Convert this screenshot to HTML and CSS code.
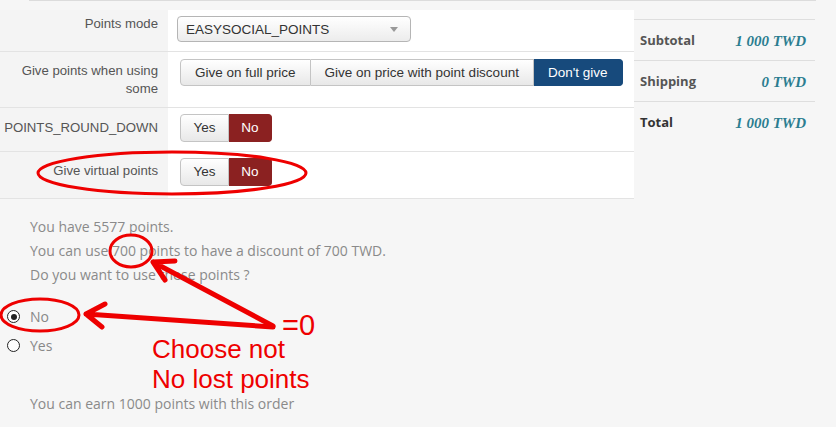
FILE: index.html
```html
<!DOCTYPE html>
<html>
<head>
<meta charset="utf-8">
<link rel="stylesheet" href="styles.css">
</head>
<body>
<div class="page">
  <div class="topline"></div>
  <div class="layout">
    <div class="main">
      <div class="form">
        <div class="row r1">
          <div class="label">Points mode</div>
          <div class="value">
            <div class="select"><span>EASYSOCIAL_POINTS</span><span class="caret"></span></div>
          </div>
        </div>
        <div class="row r2">
          <div class="label">Give points when using<br>some</div>
          <div class="value">
            <div class="btngroup">
              <span class="btn">Give on full price</span>
              <span class="btn">Give on price with point discount</span>
              <span class="btn blue">Don't give</span>
            </div>
          </div>
        </div>
        <div class="row r3">
          <div class="label">POINTS_ROUND_DOWN</div>
          <div class="value">
            <div class="btngroup">
              <span class="btn yes">Yes</span>
              <span class="btn red">No</span>
            </div>
          </div>
        </div>
        <div class="row r4">
          <div class="label">Give virtual points</div>
          <div class="value">
            <div class="btngroup">
              <span class="btn yes">Yes</span>
              <span class="btn red">No</span>
            </div>
          </div>
        </div>
      </div>
      <div class="points">
        <p class="line">You have 5577 points.</p>
        <p class="line">You can use 700 points to have a discount of 700 TWD.</p>
        <p class="line">Do you want to use these points ?</p>
        <div class="radios">
          <label class="radio"><span class="dot checked"></span>No</label>
          <label class="radio"><span class="dot"></span>Yes</label>
        </div>
        <p class="earn">You can earn 1000 points with this order</p>
      </div>
    </div>
    <div class="side">
      <div class="srow"><span class="sl">Subtotal</span><span class="sv">1 000 TWD</span></div>
      <div class="srow"><span class="sl">Shipping</span><span class="sv">0 TWD</span></div>
      <div class="srow last"><span class="sl total">Total</span><span class="sv">1 000 TWD</span></div>
    </div>
  </div>
  <svg class="notes" width="836" height="427" viewBox="0 0 836 427">
    <g fill="none" stroke="#ee0000">
      <ellipse cx="172" cy="173" rx="134" ry="21" stroke-width="3"/>
      <ellipse cx="131" cy="251" rx="21" ry="16" stroke-width="3"/>
      <ellipse cx="40" cy="315" rx="39" ry="16" stroke-width="3"/>
      <g stroke-width="5" stroke-linecap="round" stroke-linejoin="round">
        <path d="M273 326 L153 262 M153 262 L175 261 M153 262 L165 280"/>
        <path d="M273 327 L86 314 M86 314 L105 304 M86 314 L102 327"/>
      </g>
    </g>
    <g class="ntext" fill="#ee0000">
      <text x="282" y="335" class="eq">=0</text>
      <text x="152" y="358">Choose not</text>
      <text x="152" y="388">No lost points</text>
    </g>
  </svg>
</div>
</body>
</html>
```
FILE: styles.css
```css
* { box-sizing: border-box; }
html, body { margin: 0; padding: 0; }
body {
  background: #f6f6f6;
  width: 836px;
  height: 427px;
  overflow: hidden;
  font-family: "Liberation Sans", Arial, sans-serif;
}
.page { position: relative; width: 836px; height: 427px; }
.topline {
  height: 0;
  border-top: 1px solid #dcdcdc;
  margin: 0 20px 0 29px;
}
.layout { display: flex; }
.main { width: 634px; padding-top: 9px; }
.form { width: 634px; }
.row {
  display: grid;
  grid-template-columns: 168px 466px;
  border-bottom: 1px solid #e3e3e3;
}
.label {
  background: #f4f4f4;
  text-align: right;
  padding: 10px 10px 9px 0;
  font-size: 13.2px;
  line-height: 18px;
  color: #555;
  white-space: nowrap;
}
.r1 .label { padding-top: 5px; }
.r3 .label { padding-top: 11px; }
.value {
  background: #fff;
  padding: 6px 4px 9px 12px;
}
.r2 .value { padding-top: 7px; }
.r3 .value { padding-top: 6px; }
.r4 .value { padding-top: 6px; padding-bottom: 12px; }
.select {
  margin-left: -3px;
  width: 234px;
  height: 26px;
  border: 1px solid #b5b5b5;
  border-radius: 4px;
  background: linear-gradient(#ffffff, #ececec);
  display: flex;
  align-items: center;
  justify-content: space-between;
  padding: 0 12px 0 8px;
  font-size: 13.5px;
  color: #333;
}
.caret {
  width: 0; height: 0;
  border-left: 4px solid transparent;
  border-right: 4px solid transparent;
  border-top: 5px solid #999;
}
.btngroup { display: inline-flex; white-space: nowrap; }
.btn {
  height: 27px;
  line-height: 25px;
  padding: 0 14px;
  font-size: 13.5px;
  color: #333;
  border: 1px solid #c4c4c4;
  border-left-width: 0;
  background: linear-gradient(#ffffff, #e8e8e8);
  white-space: nowrap;
  flex: none;
}
.btn:first-child { border-left-width: 1px; border-radius: 4px 0 0 4px; }
.btn:last-child { border-radius: 0 4px 4px 0; }
.r3 .btn, .r4 .btn { height: 28px; line-height: 26px; }
.btn.yes { padding: 0; width: 49px; text-align: center; }
.btn.blue {
  background: #174a7c;
  border-color: #174a7c;
  color: #fff;
}
.btn.red {
  background: #8b2121;
  border-color: #8b2121;
  color: #fff;
  width: 43px;
  text-align: center;
  padding: 0;
}
.points {
  font-family: "Open Sans", sans-serif;
  font-size: 14px;
  color: #8a8a8a;
  padding-top: 16px;
}
.line { margin: 0 0 0 30px; line-height: 24px; }
.radios { margin-top: 15px; }
.radio {
  display: flex;
  align-items: center;
  height: 29px;
  font-size: 14px;
  color: #888;
  padding-left: 7px;
}
.dot {
  width: 13px;
  height: 13px;
  border: 1.5px solid #222;
  border-radius: 50%;
  margin-right: 10px;
  display: flex;
  align-items: center;
  justify-content: center;
  background: #fff;
}
.dot.checked::after {
  content: "";
  width: 6px;
  height: 6px;
  border-radius: 50%;
  background: #222;
}
.earn { margin: 34px 0 0 30px; line-height: 20px; }
.side {
  width: 181px;
  margin-top: 18px;
  font-family: "Open Sans", sans-serif;
}
.srow {
  display: flex;
  justify-content: space-between;
  align-items: center;
  height: 41px;
  border-top: 1px solid #dedede;
  padding: 0 9px 1px 6px;
}
.sl { font-size: 13px; font-weight: bold; color: #555; }
.sl.total { color: #333; }
.sv {
  font-family: "Liberation Serif", "Times New Roman", serif;
  font-style: italic;
  font-weight: bold;
  font-size: 15px;
  color: #2b7d90;
  padding-top: 3px;
}
.notes { position: absolute; left: 0; top: 0; pointer-events: none; }
.ntext text { font-family: "Liberation Sans", Arial, sans-serif; font-size: 26px; }
.ntext text.eq { font-size: 29px; }
```
